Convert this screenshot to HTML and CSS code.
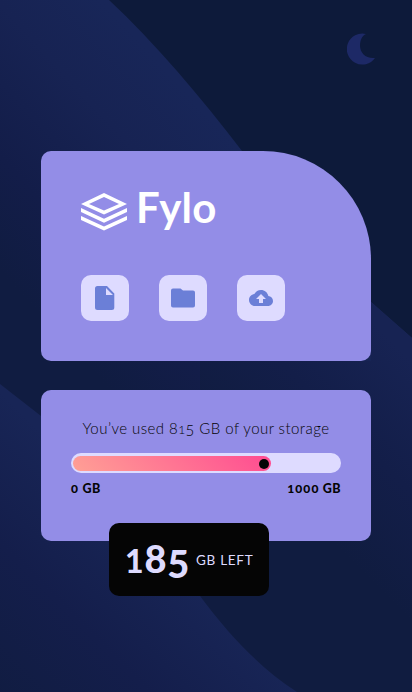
FILE: index.html
```html
<!DOCTYPE html>
<html lang="en">
<head>
<meta charset="utf-8">
<meta name="viewport" content="width=device-width, initial-scale=1">
<title>Fylo data storage</title>
<link rel="stylesheet" href="styles.css">
</head>
<body>
<svg class="backdrop" viewBox="0 0 412 692" preserveAspectRatio="none" aria-hidden="true">
  <defs>
    <linearGradient id="upper" gradientUnits="userSpaceOnUse" x1="240" y1="150" x2="50" y2="325">
      <stop offset="0" stop-color="#182658"/><stop offset=".3" stop-color="#172353"/><stop offset=".7" stop-color="#131d49"/><stop offset="1" stop-color="#101c41"/>
    </linearGradient>
    <linearGradient id="lower" gradientUnits="userSpaceOnUse" x1="180" y1="570" x2="10" y2="740">
      <stop offset="0" stop-color="#182556"/><stop offset=".45" stop-color="#141e4b"/><stop offset="1" stop-color="#101c40"/>
    </linearGradient>
    <linearGradient id="side" gradientUnits="userSpaceOnUse" x1="420" y1="370" x2="290" y2="500">
      <stop offset="0" stop-color="#172353"/><stop offset=".5" stop-color="#131e49"/><stop offset="1" stop-color="#101c40"/>
    </linearGradient>
  </defs>
  <path fill="url(#upper)" d="M109 0C155 43 200 96 242 151C286 207 324 260 371 302L412 338V692H0V0Z"/>
  <path fill="url(#side)" d="M371 302L412 338V692H200V361H371Z"/>
  <path fill="url(#lower)" d="M0 384L41 416C100 466 149 528 200 596C230 636 259 667 297 692H0Z"/>
</svg>
<button class="theme" aria-label="Toggle theme">
  <svg width="30" height="32" viewBox="0 0 30 32"><path fill="#1d2966" d="M19 1A15.5 15.5 0 1 0 28 25C19 26 13 20 13 12.500C13 7 15 3 19 1Z"/></svg>
</button>
<main class="page">
  <section class="card brand-card">
    <div class="brand">
      <svg width="46" height="38" viewBox="0 0 46 38"><path fill="#fff" fill-rule="evenodd" d="M23 0L46 11L23 21.500L0 11ZM23 4L8 11L23 17.500L38 11Z"/><path fill="#fff" d="M0 15L23 25.700L46 15V19L23 29.700L0 19ZM0 23L23 33.400L46 23V27L23 37.500L0 27Z"/></svg>
      <span class="brand-name">Fylo</span>
    </div>
    <div class="actions">
      <button class="action" aria-label="Document"><svg width="20" height="24" viewBox="0 0 20 24"><path fill="#6b7fd7" fill-rule="evenodd" d="M2.500 0H12L19.300 7.500V21.500Q19.300 24 16.800 24H2.500Q0 24 0 21.500V2.500Q0 0 2.500 0ZM11 2V9H18Z"/></svg></button>
      <button class="action" aria-label="Folder"><svg width="24" height="20" viewBox="0 0 24 20"><path fill="#6b7fd7" d="M2 .5H9.500L12 2.600H22Q24 2.600 24 4.600V17.500Q24 19.500 22 19.500H2Q0 19.500 0 17.500V2.500Q0 .5 2 .5Z"/></svg></button>
      <button class="action" aria-label="Upload"><svg width="24" height="24" viewBox="0 0 24 24"><path fill="#6b7fd7" d="M19.350 10.040C18.670 6.590 15.640 4 12 4 9.110 4 6.600 5.640 5.350 8.040 2.340 8.360 0 10.910 0 14c0 3.310 2.690 6 6 6h13c2.760 0 5-2.240 5-5 0-2.640-2.050-4.780-4.650-4.960zM14 13v4h-4v-4H7l5-5 5 5h-3z"/></svg></button>
    </div>
  </section>
  <section class="card usage-card">
    <p class="summary">You’ve used 8<span class="low-one">1</span><span class="low-five">5</span> GB of your storage</p>
    <div class="track"><div class="fill"><span class="knob"></span></div></div>
    <div class="scale"><span><span class="low-digits">0</span> GB</span><span><span class="low-digits">1000</span> GB</span></div>
    <div class="remaining"><strong class="amount"><span class="short">1</span><span>8</span><span class="drop">5</span></strong><span class="unit">GB LEFT</span></div>
  </section>
</main>
</body>
</html>
```
FILE: styles.css
```css
* { box-sizing: border-box; }
body {
  margin: 0;
  min-height: 692px;
  background: #0d1a3a;
  color: #050505;
  font-family: Lato, "Open Sans", sans-serif;
}
button { border: 0; padding: 0; background: none; }
svg { display: block; }
.backdrop { position: absolute; inset: 0; width: 100%; height: 692px; }
.theme { position: absolute; top: 33px; right: 35px; }
.page {
  position: relative;
  display: flex;
  flex-direction: column;
  gap: 29px;
  padding: 151px 41px 0;
}
.card { background: #938de7; border-radius: 10px; }
.brand-card { height: 210px; padding: 42px 40px 0; border-top-right-radius: 108px; }
.brand { display: flex; gap: 9px; height: 38px; }
.brand-name {
  color: #fff;
  font-size: 42px;
  font-weight: 700;
  line-height: 28px;
  letter-spacing: 0.1px;
}
.actions { display: flex; gap: 30px; margin-top: 44px; }
.action {
  display: grid;
  place-items: center;
  width: 48px;
  height: 46px;
  border-radius: 10px;
  background: #dedbff;
}
.usage-card { position: relative; height: 151px; padding: 27px 30px 0; }
.summary {
  margin: 0;
  text-align: center;
  white-space: nowrap;
  font-size: 15px;
  font-weight: 300;
  line-height: 22px;
  height: 22px;
  letter-spacing: 0.45px;
}
.low-one { font-size: 12px; }
.low-five { position: relative; top: 2px; }
.track { height: 20px; margin-top: 14px; padding: 3px 2px 2px; border-radius: 10px; background: #dedbff; }
.fill {
  display: flex;
  align-items: center;
  justify-content: flex-end;
  width: 198px;
  height: 15px;
  padding: 1px 2px 0 0;
  border-radius: 8px;
  background: linear-gradient(45deg, #ffa095, #ff4b91);
}
.knob { width: 10px; height: 10px; border-radius: 50%; background: #050505; }
.scale {
  display: flex;
  justify-content: space-between;
  margin-top: 7px;
  font-size: 12.5px;
  font-weight: 900;
  line-height: 18px;
  letter-spacing: 0.4px;
}
.low-digits { font-size: 12px; letter-spacing: 1.1px; }
.remaining {
  position: absolute;
  top: 133px;
  left: 68px;
  display: flex;
  align-items: center;
  gap: 6px;
  width: 160px;
  height: 73px;
  padding: 0 0 0 16px;
  border-radius: 10px;
  background: #050505;
  color: #dedbff;
}
.amount { display: flex; align-items: baseline; font-size: 38px; font-weight: 900; line-height: 46px; letter-spacing: 0.8px; }
.short { font-size: 32px; }
.drop { position: relative; top: 5px; }
.unit { font-size: 13.5px; letter-spacing: 0.7px; white-space: nowrap; }
```
